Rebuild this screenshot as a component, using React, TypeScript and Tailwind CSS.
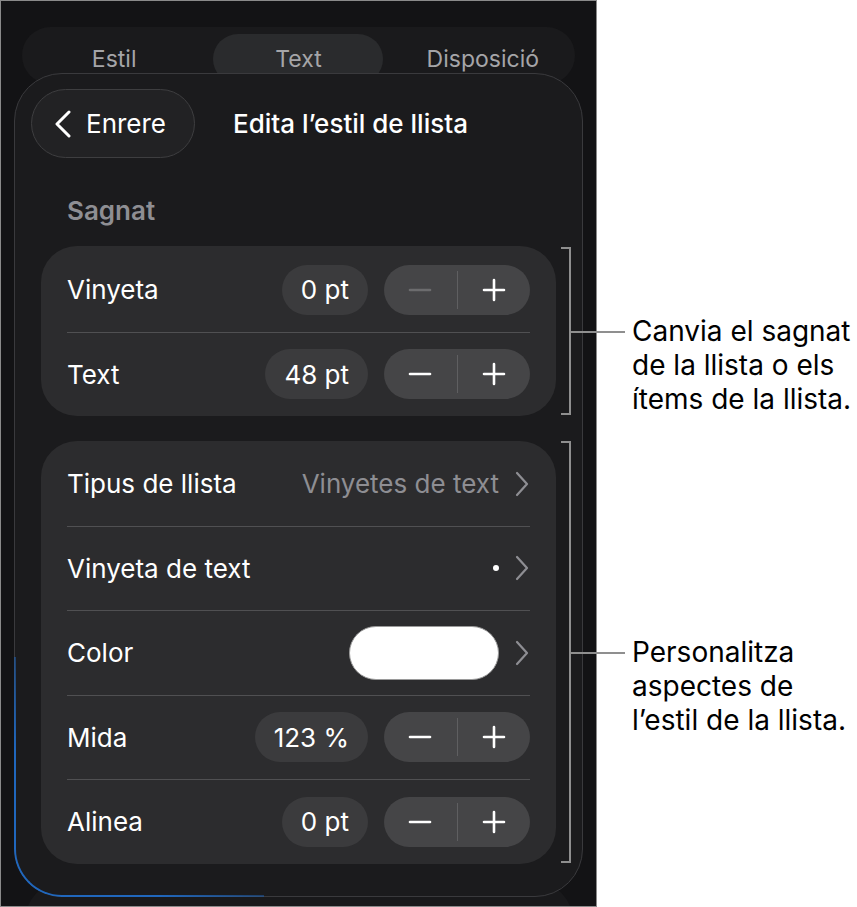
import React from "react";

const font = { fontFamily: "Inter, 'Noto Sans', sans-serif" };

function Minus(props: { dim?: boolean }) {
	return (
		<svg width="24" height="24" viewBox="0 0 24 24">
			<path d="M2 12h20" stroke={props.dim ? "#6c6c6e" : "#ffffff"} strokeWidth="2.6" strokeLinecap="round" />
		</svg>
	);
}

function Plus() {
	return (
		<svg width="24" height="24" viewBox="0 0 24 24">
			<path d="M2 12h20M12 2v20" stroke="#ffffff" strokeWidth="2.6" strokeLinecap="round" />
		</svg>
	);
}

function Chevron() {
	return (
		<svg width="16" height="26" viewBox="0 0 16 26" className="ml-[15px]">
			<path d="M3 2l10 11L3 24" fill="none" stroke="#8e8e93" strokeWidth="2.2" strokeLinecap="round" strokeLinejoin="round" />
		</svg>
	);
}

function Stepper(props: { value: string; dimMinus?: boolean }) {
	return (
		<div className="flex items-center gap-[16px]">
			<div className="h-[50px] px-[19px] rounded-full bg-[#3b3b3d] flex items-center text-[26px] text-white">
				{props.value}
			</div>
			<div className="w-[146px] h-[50px] rounded-full bg-[#454547] flex items-center">
				<div className="flex-1 flex justify-center">
					<Minus dim={props.dimMinus} />
				</div>
				<div className="w-px h-[38px] bg-[#5f5f61]" />
				<div className="flex-1 flex justify-center">
					<Plus />
				</div>
			</div>
		</div>
	);
}

function Row(props: { label: string; children: React.ReactNode }) {
	return (
		<div className="h-[83.5px] px-[26px] flex items-center justify-between">
			<span className="text-[26px] text-white">{props.label}</span>
			<div className="flex items-center">{props.children}</div>
		</div>
	);
}

function Divider() {
	return <div className="mx-[26px] h-px bg-[#505052]" />;
}

function Bracket(props: { top: number; height: number; lines: string[] }) {
	return (
		<div className="absolute z-20 left-[561px] w-[296px]" style={{ top: props.top, height: props.height }}>
			<div className="absolute left-0 top-0 w-[10px] h-[2px] bg-[#8f8f8f]" />
			<div className="absolute left-[8px] top-0 bottom-0 w-[2px] bg-[#8f8f8f]" />
			<div className="absolute left-0 bottom-0 w-[10px] h-[2px] bg-[#8f8f8f]" />
			<div className="absolute left-[10px] top-1/2 w-[54px] h-[2px] bg-[#8f8f8f]" />
			<div className="absolute left-[71px] top-1/2 -translate-y-[17px] text-[28px] leading-[34px] text-black whitespace-nowrap">
				{props.lines.map((l, i) => (
					<div key={i}>{l}</div>
				))}
			</div>
		</div>
	);
}

export default function App() {
	return (
		<div className="relative w-[857px] h-[907px] bg-white flex overflow-hidden" style={font}>
			<div className="w-[597px] h-[907px] border border-[#8a8a8a] bg-[#131315] flex flex-col overflow-hidden">
				<div className="ml-[21px] mt-[26px] w-[553px] h-[64px] rounded-full bg-[#1a1a1c] flex pt-[7px]">
					<div className="flex-1 flex justify-center pt-[8px] text-[23px] text-[#a5a5a8]">Estil</div>
					<div className="flex-1 flex justify-center">
						<div className="w-[170px] h-[50px] rounded-full bg-[#2a2b2d] flex justify-center pt-[8px] text-[23px] text-[#a5a5a8]">
							Text
						</div>
					</div>
					<div className="flex-1 flex justify-center pt-[8px] text-[23px] text-[#a5a5a8]">Disposició</div>
				</div>

				<div className="relative z-10 ml-[13px] -mt-[11px] w-[569px] h-[824px] shrink-0 rounded-[48px] border border-[#3a3a3d] bg-[#1b1b1d]">
					<div className="absolute left-[-1px] bottom-[-1px] w-[250px] h-[240px] rounded-bl-[48px] border-l-2 border-b-2 border-[#2067bd] shadow-[-2px_2px_6px_rgba(32,103,189,0.45)] [mask-image:linear-gradient(45deg,black_30%,transparent_70%)]" />
					<div className="flex items-center pl-[16px] pt-[15px]">
						<div className="w-[164px] h-[69px] rounded-full border border-[#3e3e40] bg-[#222224] flex items-center pl-[22px]">
							<svg width="18" height="28" viewBox="0 0 18 28">
								<path d="M15 2L3 14l12 12" fill="none" stroke="#ffffff" strokeWidth="3" strokeLinecap="round" strokeLinejoin="round" />
							</svg>
							<span className="ml-[14px] text-[26px] text-white">Enrere</span>
						</div>
						<span className="ml-[38px] text-[26px] font-medium text-white">Edita l’estil de llista</span>
					</div>

					<div className="mt-[40px] pl-[52px] text-[26px] leading-[26px] font-semibold text-[#8e8e93]">Sagnat</div>

					<div className="relative mx-[26px] mt-[22px] rounded-[36px] bg-[#2c2c2e] pt-[2px]">
						<Row label="Vinyeta">
							<Stepper value="0 pt" dimMinus />
						</Row>
						<Divider />
						<Row label="Text">
							<Stepper value="48 pt" />
						</Row>
					</div>

					<div className="relative mx-[26px] mt-[25px] rounded-[36px] bg-[#2c2c2e] pt-px">
						<Row label="Tipus de llista">
							<span className="text-[26px] text-[#8e8e93]">Vinyetes de text</span>
							<Chevron />
						</Row>
						<Divider />
						<Row label="Vinyeta de text">
							<span className="w-[6px] h-[6px] rounded-full bg-white" />
							<Chevron />
						</Row>
						<Divider />
						<Row label="Color">
							<span className="w-[150px] h-[54px] rounded-full bg-white border border-[#9a9a9a]" />
							<Chevron />
						</Row>
						<Divider />
						<Row label="Mida">
							<Stepper value="123 %" />
						</Row>
						<Divider />
						<Row label="Alinea">
							<Stepper value="0 pt" />
						</Row>
					</div>
				</div>
				<div className="ml-[24px] -mt-[16px] w-[548px] h-[60px] shrink-0 rounded-t-[40px] bg-[#19191b]" />
			</div>

			<Bracket top={247} height={168} lines={["Canvia el sagnat", "de la llista o els", "ítems de la llista."]} />
			<Bracket top={441} height={422} lines={["Personalitza", "aspectes de", "l’estil de la llista."]} />
		</div>
	);
}
